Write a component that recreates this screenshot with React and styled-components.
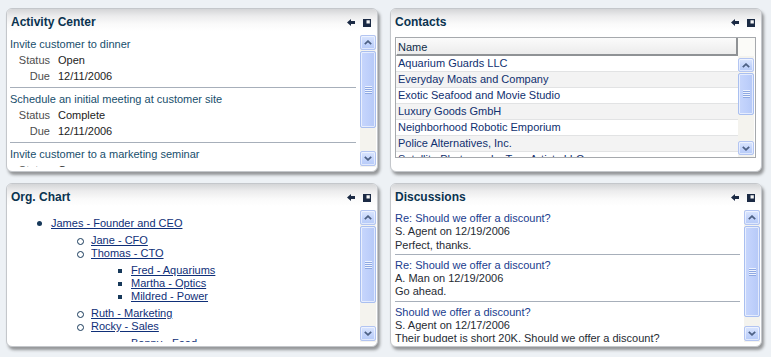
import React from "react";
import styled, { createGlobalStyle } from "styled-components";

const Global = createGlobalStyle`
  html, body { margin: 0; padding: 0; background: #edf1f5; }
  body { font-family: "Liberation Sans", Arial, sans-serif; font-size: 11px; }
  * { box-sizing: border-box; }
`;

const Page = styled.div`
  display: grid;
  grid-template-columns: 372px 372px;
  grid-auto-rows: 164px;
  column-gap: 12px;
  row-gap: 11px;
  padding: 8px 0 0 6px;
  width: 771px;
  height: 357px;
  background: #edf1f5;
`;

const Panel = styled.section`
  display: flex;
  flex-direction: column;
  background: #fff;
  border: 1px solid #c4c7cb;
  border-radius: 6px;
  box-shadow: 2px 3px 3px rgba(40, 40, 40, 0.45);
  overflow: hidden;
`;

const Header = styled.div`
  height: 26px;
  flex-shrink: 0;
  display: flex;
  align-items: center;
  padding: 0 6px 0 4px;
  background: linear-gradient(#d4d5d7 0px, #ececed 7px, #fafafa 15px, #ffffff 22px);
`;

const Title = styled.h2`
  margin: 0;
  flex: 1;
  font-size: 12px;
  font-weight: bold;
  color: #0a3350;
  font-family: "Liberation Sans", Arial, sans-serif;
`;

const Tools = styled.div`
  display: flex;
  align-items: center;
  gap: 8px;
  padding-top: 1px;
`;

const Body = styled.div`
  flex: 1;
  min-height: 0;
  display: flex;
  padding: 0 1px 4px 0;
`;

const Content = styled.div`
  flex: 1;
  min-width: 0;
  overflow: hidden;
  padding: ${(p) => p.$pad || "1px 4px 0 3px"};
`;

/* ---------- scrollbar ---------- */
const ScrollCol = styled.div`
  width: 16px;
  flex-shrink: 0;
  display: flex;
  flex-direction: column;
  background: #f4f3ee;
  padding: ${(p) => p.$pad || "0 0 1px"};
`;

const ScrollBtn = styled.div`
  height: ${(p) => p.$h || 15}px;
  flex-shrink: 0;
  border: 1px solid #b3c5f2;
  border-radius: 2px;
  background: linear-gradient(#dbe6fe, #c2d3fb 60%, #b7cbf8);
  box-shadow: inset 0 0 0 1px rgba(255, 255, 255, 0.55);
  display: flex;
  align-items: center;
  justify-content: center;
`;

const Track = styled.div`
  flex: 1;
  padding-top: 1px;
`;

const Thumb = styled.div`
  height: ${(p) => p.$h}px;
  border: 1px solid #a9bff0;
  border-radius: 2px;
  background: linear-gradient(90deg, #c7d6fc, #bfd0fb 50%, #b6c9f7);
  box-shadow: inset 0 0 0 1px rgba(255, 255, 255, 0.6);
  display: flex;
  align-items: center;
  justify-content: center;
`;

const Grip = styled.div`
  width: 7px;
  height: 8px;
  background: repeating-linear-gradient(
    #eef3fe 0px,
    #eef3fe 1px,
    #8ea8e2 1px,
    #8ea8e2 2px
  );
`;

const Chevron = ({ down }) => (
  <svg width="8" height="5" viewBox="0 0 8 5">
    <path
      d={down ? "M0.8 0.8 L4 3.8 L7.2 0.8" : "M0.8 4.2 L4 1.2 L7.2 4.2"}
      fill="none"
      stroke="#4d6185"
      strokeWidth="1.8"
    />
  </svg>
);

const Scrollbar = ({ thumb, btn, pad }) => (
  <ScrollCol $pad={pad}>
    <ScrollBtn $h={btn}>
      <Chevron />
    </ScrollBtn>
    <Track>
      <Thumb $h={thumb}>
        <Grip />
      </Thumb>
    </Track>
    <ScrollBtn $h={btn}>
      <Chevron down />
    </ScrollBtn>
  </ScrollCol>
);

const BackIcon = () => (
  <svg width="8" height="7" viewBox="0 0 8 7">
    <path d="M0 3.5 L4 0 V2 H8 V5 H4 V7 Z" fill="#1b2a44" />
  </svg>
);

const RestoreIcon = () => (
  <svg width="8" height="8" viewBox="0 0 8 8">
    <path
      d="M0 0 H8 V8 H0 Z M3.5 1.2 V4.5 H6.8 V1.2 Z"
      fill="#1b2a44"
      fillRule="evenodd"
    />
  </svg>
);

const PanelFrame = ({ title, children }) => (
  <Panel>
    <Header>
      <Title>{title}</Title>
      <Tools>
        <BackIcon />
        <RestoreIcon />
      </Tools>
    </Header>
    {children}
  </Panel>
);

/* ---------- activity ---------- */
const Task = styled.div`
  padding: 3px 0 3px;
  border-bottom: 1px solid #a7afba;
  &:first-child { padding-top: 0; }
`;

const TaskTitle = styled.div`
  height: 16px;
  line-height: 16px;
  color: #174e6c;
`;

const Field = styled.div`
  display: grid;
  grid-template-columns: 40px 1fr;
  column-gap: 8px;
  height: 16px;
  line-height: 16px;
`;

const Label = styled.span`
  text-align: right;
  color: #4d4d4d;
`;

const Value = styled.span`
  color: #222;
`;

const tasks = [
  { title: "Invite customer to dinner", status: "Open", due: "12/11/2006" },
  { title: "Schedule an initial meeting at customer site", status: "Complete", due: "12/11/2006" },
  { title: "Invite customer to a marketing seminar", status: "Open", due: "12/18/2006" },
];

/* ---------- contacts ---------- */
const GridBox = styled.div`
  flex: 1;
  margin: 2px 4px 9px 4px;
  border: 1px solid #a6a9ad;
  display: grid;
  grid-template-columns: 1fr 17px;
  grid-template-rows: 18px 1fr;
  overflow: hidden;
  background: #fff;
`;

const ColHead = styled.div`
  height: 18px;
  line-height: 16px;
  padding: 1px 0 0 1px;
  color: #0f2c48;
  background: linear-gradient(#fbfbfb, #ececec);
  border-left: 1px solid #ffffff;
  border-right: 2px solid #8f9295;
  border-bottom: 2px solid #8f9295;
`;

const Corner = styled.div`
  background: #fbfbf8;
`;

const Rows = styled.div`
  overflow: hidden;
`;

const Row = styled.div`
  height: 16px;
  line-height: 15px;
  padding-left: 2px;
  border-bottom: 1px solid #e2e3e4;
  color: #10306f;
  white-space: nowrap;
  background: ${(p) => (p.$alt ? "#f3f3f3" : "#ffffff")};
`;

const contacts = [
  "Aquarium Guards LLC",
  "Everyday Moats and Company",
  "Exotic Seafood and Movie Studio",
  "Luxury Goods GmbH",
  "Neighborhood Robotic Emporium",
  "Police Alternatives, Inc.",
  "Satellite Photography Tree Artists LLC",
  "Wide World Importers",
];

/* ---------- org chart ---------- */
const Org = styled.ul`
  list-style: none;
  margin: ${(p) => (p.$level === 1 ? "7px 0 0" : "4px 0")};
  padding: 0 0 0 ${(p) => (p.$level === 1 ? 41 : 40)}px;
  line-height: 13px;
`;

const OrgItem = styled.li`
  position: relative;
  &::before {
    content: "";
    position: absolute;
    top: ${(p) => (p.$level === 3 ? 5 : 4)}px;
    left: ${(p) => (p.$level === 3 ? -13 : -14)}px;
    width: ${(p) => (p.$level === 3 ? 4 : 5)}px;
    height: ${(p) => (p.$level === 3 ? 4 : 5)}px;
    border-radius: ${(p) => (p.$level === 3 ? 0 : "50%")};
    background: ${(p) => (p.$level === 2 ? "transparent" : "#17395a")};
    border: ${(p) => (p.$level === 2 ? "1px solid #17395a" : "none")};
  }
`;

const OrgLink = styled.a`
  color: #0f2f78;
  text-decoration: underline;
  white-space: nowrap;
`;

const org = {
  name: "James - Founder and CEO",
  kids: [
    { name: "Jane - CFO" },
    {
      name: "Thomas - CTO",
      kids: [{ name: "Fred - Aquariums" }, { name: "Martha - Optics" }, { name: "Mildred - Power" }],
    },
    { name: "Ruth - Marketing" },
    { name: "Rocky - Sales", kids: [{ name: "Bonny - Food" }] },
  ],
};

const OrgNode = ({ node, level }) => (
  <OrgItem $level={level}>
    <OrgLink href="#">{node.name}</OrgLink>
    {node.kids && (
      <Org $level={level + 1}>
        {node.kids.map((k) => (
          <OrgNode key={k.name} node={k} level={level + 1} />
        ))}
      </Org>
    )}
  </OrgItem>
);

/* ---------- discussions ---------- */
const Post = styled.div`
  padding: 4px 0 2px;
  border-bottom: 1px solid #a7afba;
  line-height: 13.3px;
  &:first-child { padding-top: 2px; }
`;

const PostTitle = styled.div`
  color: #1a3c8e;
`;

const PostLine = styled.div`
  color: #262b33;
  white-space: nowrap;
`;

const posts = [
  { t: "Re: Should we offer a discount?", a: "S. Agent on 12/19/2006", b: "Perfect, thanks." },
  { t: "Re: Should we offer a discount?", a: "A. Man on 12/19/2006", b: "Go ahead." },
  { t: "Should we offer a discount?", a: "S. Agent on 12/17/2006", b: "Their budget is short 20K. Should we offer a discount?" },
];

export default function App() {
  return (
    <>
      <Global />
      <Page>
        <PanelFrame title="Activity Center">
          <Body>
            <Content>
              {tasks.map((t) => (
                <Task key={t.title}>
                  <TaskTitle>{t.title}</TaskTitle>
                  <Field>
                    <Label>Status</Label>
                    <Value>{t.status}</Value>
                  </Field>
                  <Field>
                    <Label>Due</Label>
                    <Value>{t.due}</Value>
                  </Field>
                </Task>
              ))}
            </Content>
            <Scrollbar thumb={77} />
          </Body>
        </PanelFrame>

        <PanelFrame title="Contacts">
          <Body>
            <GridBox>
              <ColHead>Name</ColHead>
              <Corner />
              <Rows>
                {contacts.map((c, i) => (
                  <Row key={c} $alt={i % 2 === 1}>
                    {c}
                  </Row>
                ))}
              </Rows>
              <Scrollbar thumb={42} btn={14} pad="2px 0 2px" />
            </GridBox>
          </Body>
        </PanelFrame>

        <PanelFrame title="Org. Chart">
          <Body>
            <Content $pad="0 4px 0 3px">
              <Org $level={1}>
                <OrgNode node={org} level={1} />
              </Org>
            </Content>
            <Scrollbar thumb={77} />
          </Body>
        </PanelFrame>

        <PanelFrame title="Discussions">
          <Body>
            <Content $pad="0 4px 0 4px">
              {posts.map((p, i) => (
                <Post key={i}>
                  <PostTitle>{p.t}</PostTitle>
                  <PostLine>{p.a}</PostLine>
                  <PostLine>{p.b}</PostLine>
                </Post>
              ))}
            </Content>
            <Scrollbar thumb={91} />
          </Body>
        </PanelFrame>
      </Page>
    </>
  );
}
